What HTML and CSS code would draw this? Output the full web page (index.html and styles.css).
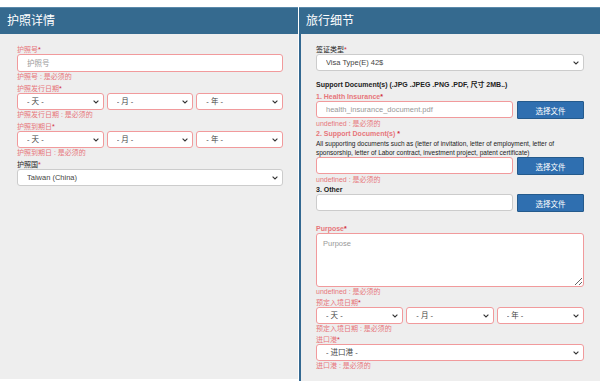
FILE: index.html
```html
<!DOCTYPE html>
<html>
<head>
    <meta name="viewport" content="width=device-width, initial-scale=1">
    <link rel="stylesheet" href="styles.css">
</head>
<body>
    <div class="page">
        <div class="panel panel-left">
            <h2 class="panel-title">护照详情</h2>
            <div class="panel-body">
                <div class="field">
                    <label class="label invalid">护照号<span class="req">*</span></label>
                    <input type="text" class="control invalid" placeholder="护照号">
                    <div class="error">护照号 : 是必须的</div>
                </div>
                <div class="field">
                    <label class="label invalid">护照发行日期<span class="req">*</span></label>
                    <div class="date-row">
                        <select class="control invalid"><option>- 天 -</option></select>
                        <select class="control invalid"><option>- 月 -</option></select>
                        <select class="control invalid"><option>- 年 -</option></select>
                    </div>
                    <div class="error">护照发行日期 : 是必须的</div>
                </div>
                <div class="field">
                    <label class="label invalid">护照到期日<span class="req">*</span></label>
                    <div class="date-row">
                        <select class="control invalid"><option>- 天 -</option></select>
                        <select class="control invalid"><option>- 月 -</option></select>
                        <select class="control invalid"><option>- 年 -</option></select>
                    </div>
                    <div class="error">护照到期日 : 是必须的</div>
                </div>
                <div class="field">
                    <label class="label">护照国<span class="req">*</span></label>
                    <select class="control"><option>Taiwan (China)</option></select>
                </div>
            </div>
        </div>

        <div class="panel panel-right">
            <h2 class="panel-title">旅行细节</h2>
            <div class="panel-body">
                <div class="field">
                    <label class="label">签证类型<span class="req">*</span></label>
                    <select class="control"><option>Visa Type(E) 42$</option></select>
                </div>

                <div class="docs">
                    <div class="docs-title">Support Document(s) (.JPG .JPEG .PNG .PDF, 尺寸 2MB..)</div>

                    <div class="field">
                        <label class="label bold invalid">1. Health Insurance<span class="req">*</span></label>
                        <div class="file-row">
                            <input type="text" class="control invalid" placeholder="health_insurance_document.pdf">
                            <button class="btn-file">选择文件</button>
                        </div>
                        <div class="error">undefined : 是必须的</div>
                    </div>

                    <div class="field">
                        <label class="label bold invalid">2. Support Document(s) <span class="req">*</span></label>
                        <p class="hint">All supporting documents such as (letter of invitation, letter of employment, letter of sponsorship, letter of Labor contract, investment project, patent certificate)</p>
                        <div class="file-row">
                            <input type="text" class="control invalid">
                            <button class="btn-file">选择文件</button>
                        </div>
                        <div class="error">undefined : 是必须的</div>
                    </div>

                    <div class="field">
                        <label class="label bold">3. Other</label>
                        <div class="file-row">
                            <input type="text" class="control">
                            <button class="btn-file">选择文件</button>
                        </div>
                    </div>
                </div>

                <div class="field purpose">
                    <label class="label bold invalid">Purpose<span class="req">*</span></label>
                    <textarea class="control invalid" placeholder="Purpose"></textarea>
                    <div class="error">undefined : 是必须的</div>
                </div>

                <div class="field">
                    <label class="label invalid">预定入境日期<span class="req">*</span></label>
                    <div class="date-row">
                        <select class="control invalid"><option>- 天 -</option></select>
                        <select class="control invalid"><option>- 月 -</option></select>
                        <select class="control invalid"><option>- 年 -</option></select>
                    </div>
                    <div class="error">预定入境日期 : 是必须的</div>
                </div>

                <div class="field">
                    <label class="label invalid">进口港<span class="req">*</span></label>
                    <select class="control invalid"><option>- 进口港 -</option></select>
                    <div class="error">进口港 : 是必须的</div>
                </div>
            </div>
        </div>
    </div>
</body>
</html>
```

FILE: styles.css
```css
body {
    margin: 0;
    background-color: white;
    font-family: "Liberation Sans", Arial, "Noto Sans CJK SC", sans-serif;
    color: #222;
}

.page {
    display: flex;
    padding-top: 7px;
    height: 374px;
}

.panel {
    display: flex;
    flex-direction: column;
    background-color: #eeeeee;
}

.panel-left {
    width: 298px;
    border-right: 1px solid white;
    margin-bottom: 2px;
}

.panel-right {
    flex: 1;
}

.panel-title {
    margin: 0;
    height: 26px;
    line-height: 26px;
    padding-left: 7px;
    background-color: #356a8f;
    border-top: 1px solid #5a89aa;
    color: white;
    font-size: 12px;
    font-weight: normal;
}

.panel-body {
    flex: 1;
    padding: 11px 15px 0 17px;
}

.panel-left .field {
    margin-bottom: 3px;
}

.panel-right .panel-body {
    border-left: 2px solid #336891;
    padding: 11px 16px 0 15px;
}

.field {
    display: flex;
    flex-direction: column;
    margin-bottom: 2px;
}

.label {
    font-size: 7px;
    line-height: 9px;
    color: #222;
}

.label.bold {
    font-weight: bold;
    line-height: 8px;
}

.label.invalid {
    color: #e7767b;
}

.req {
    color: #d0303a;
}

.control {
    box-sizing: border-box;
    height: 17px;
    width: 100%;
    margin: 0;
    padding: 0 9px;
    font-family: "Liberation Sans", Arial, "Noto Sans CJK SC", sans-serif;
    font-size: 7.5px;
    color: #444;
    background-color: white;
    border: 1px solid #cccccc;
    border-radius: 3px;
    outline: none;
}

input.control {
    height: 18px;
}

.file-row input.control {
    height: 17px;
}

select.control {
    -webkit-appearance: none;
    appearance: none;
    background-image: url("data:image/svg+xml,%3Csvg xmlns='http://www.w3.org/2000/svg' width='6' height='4' viewBox='0 0 6 4'%3E%3Cpath d='M0.6 0.6 L3 3 L5.4 0.6' fill='none' stroke='%23333' stroke-width='1.1'/%3E%3C/svg%3E");
    background-repeat: no-repeat;
    background-position: right 4px center;
    background-size: 6px 4px;
}

.control.invalid {
    border-color: #f19a9c;
}

.control::placeholder {
    color: #999;
}

.error {
    font-size: 7px;
    line-height: 9px;
    color: #e7767b;
}

.date-row {
    display: grid;
    grid-template-columns: 1fr 1fr 1fr;
    gap: 3px;
}

.docs {
    margin-top: 9px;
}

.docs-title {
    font-size: 7px;
    font-weight: bold;
    line-height: 10px;
    margin-bottom: 3px;
}

.hint {
    margin: 1px 0 0;
    font-size: 6.5px;
    line-height: 9px;
    color: #222;
}

.file-row {
    display: flex;
    gap: 4px;
}

.file-row .control {
    flex: 1;
    width: auto;
}

.btn-file {
    width: 67px;
    height: 18px;
    margin: 0;
    padding: 0;
    background-color: #2f6fb0;
    border: 1px solid #245a8c;
    border-radius: 1px;
    color: white;
    font-family: "Noto Sans CJK SC", sans-serif;
    font-size: 7.5px;
}

.purpose {
    margin-top: 13px;
}

.purpose textarea {
    height: 54px;
    padding: 5px 6px;
    resize: vertical;
}

.purpose + .field,
.purpose + .field + .field {
    margin-top: 1px;
}
```
